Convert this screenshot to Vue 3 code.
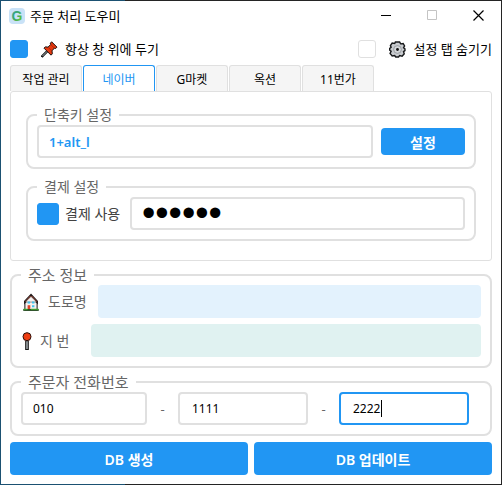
<template>
  <div class="window">
    <header class="title-bar">
      <svg class="app-icon" viewBox="0 0 16 16" aria-hidden="true">
        <defs>
          <linearGradient id="logo-fill" x1="0" y1="0" x2="1" y2="1">
            <stop offset="0" stop-color="#2f9fb4" />
            <stop offset="0.5" stop-color="#3faa5c" />
            <stop offset="1" stop-color="#7ed321" />
          </linearGradient>
        </defs>
        <rect width="16" height="16" rx="4" fill="#c9e2f7" />
        <text x="8" y="13" text-anchor="middle" class="logo-letter" fill="url(#logo-fill)">G</text>
      </svg>
      <h1 class="title">주문 처리 도우미</h1>
      <div class="window-controls">
        <button type="button" aria-label="최소화">
          <svg viewBox="0 0 11 11"><path d="M0 5.5h10" stroke="#000" /></svg>
        </button>
        <button type="button" aria-label="최대화" disabled>
          <svg viewBox="0 0 11 11"><path d="M.5.5h9v9h-9z" stroke="#c4c4c4" fill="none" /></svg>
        </button>
        <button type="button" aria-label="닫기">
          <svg viewBox="0 0 11 11"><path d="M.5.5l10 10M10.5.5l-10 10" stroke="#000" stroke-width="1.2" /></svg>
        </button>
      </div>
    </header>

    <main class="content">
      <div class="options">
        <label class="option">
          <input v-model="alwaysOnTop" type="checkbox" class="check" />
          <svg class="option-icon" viewBox="0 0 51 50" aria-hidden="true">
            <path d="M2 47L19 30" stroke="#111" stroke-width="7" />
            <path d="M4 45L19 30" stroke="#a9b4b8" stroke-width="3" />
            <path
              d="M32 2L48 18L44 22L40 21L33 29L34 38L30 42L9 21L13 17L21 18L29 10L28 6Z"
              fill="#e5390f"
              stroke="#1d1210"
              stroke-width="3"
            />
            <path d="M29 10L40 21M21 18L33 29" stroke="#9c2408" stroke-width="2" />
          </svg>
          <span>항상 창 위에 두기</span>
        </label>
        <label class="option">
          <input v-model="hideTabs" type="checkbox" class="check" />
          <svg class="option-icon" viewBox="0 0 48 48" aria-hidden="true">
            <path
              d="M18 3h12l3 5 7-1 4 7-3 5 4 3v5l-4 3 2 6-6 7-7-2-3 4H19l-3-4-7 1-6-7 3-6-4-3v-5l4-3-2-5 5-7 7 1z"
              fill="#c9ccd0"
              stroke="#17191b"
              stroke-width="4"
            />
            <circle cx="24" cy="24" r="11" fill="#d3d6d9" stroke="#85898e" stroke-width="2" />
            <circle cx="24" cy="24" r="4" fill="#111" />
          </svg>
          <span>설정 탭 숨기기</span>
        </label>
      </div>

      <div class="tabs" role="tablist">
        <button
          v-for="tab in tabs"
          :key="tab"
          type="button"
          role="tab"
          class="tab"
          :class="{ active: tab === currentTab }"
          :aria-selected="tab === currentTab"
          @click="currentTab = tab"
        >
          {{ tab }}
        </button>
      </div>

      <section class="tab-panel" role="tabpanel">
        <fieldset class="group">
          <legend class="small">단축키 설정</legend>
          <div class="row hotkey-row">
            <input v-model="hotkey" class="field hotkey" type="text" aria-label="단축키" />
            <button type="button" class="primary set-button">설정</button>
          </div>
        </fieldset>
        <fieldset class="group">
          <legend class="small">결제 설정</legend>
          <div class="row">
            <label class="pay-label">
              <input v-model="usePayment" type="checkbox" class="check large" />
              <span>결제 사용</span>
            </label>
            <input v-model="password" class="field password" type="password" aria-label="결제 비밀번호" />
          </div>
        </fieldset>
      </section>

      <fieldset class="group address">
        <legend>주소 정보</legend>
        <div class="row">
          <label class="address-label road" for="road">
            <svg class="house" viewBox="0 0 50 53" aria-hidden="true">
              <path d="M7 26h36v24H7z" fill="#f5f1ef" stroke="#211c1c" stroke-width="3" />
              <path d="M25 4L6 24v6L25 11l19 19v-6z" fill="#e2644c" stroke="#211c1c" stroke-width="3" />
              <path d="M25 11L10 26h30z" fill="#f5f1ef" />
              <path d="M15 25h7v6h-7zM28 25h7v6h-7zM28 36h7v6h-7z" fill="#42c3ee" />
              <path d="M15 36h8v12h-8z" fill="#dc4328" />
              <path d="M2 50h46" stroke="#1d4a1a" stroke-width="5" />
              <path d="M3 48h12M25 48h22" stroke="#43b52f" stroke-width="3" />
            </svg>
            <span>도로명</span>
          </label>
          <input id="road" class="address-field blue" type="text" readonly />
        </div>
        <div class="row">
          <label class="address-label lot" for="lot">
            <svg class="round-pin" viewBox="0 0 28 54" aria-hidden="true">
              <path d="M14 26v28" stroke="#151515" stroke-width="11" />
              <path d="M14 28v23" stroke="#b9c0c4" stroke-width="4" />
              <circle cx="14" cy="14" r="12" fill="#ee3d12" stroke="#2b100b" stroke-width="3" />
            </svg>
            <span>지 번</span>
          </label>
          <input id="lot" class="address-field teal" type="text" readonly />
        </div>
      </fieldset>

      <fieldset class="group">
        <legend>주문자 전화번호</legend>
        <div class="phone-row">
          <input v-model="phone[0]" class="field" type="text" aria-label="전화번호 앞자리" />
          <span>-</span>
          <input v-model="phone[1]" class="field wide" type="text" aria-label="전화번호 가운데 자리" />
          <span>-</span>
          <input v-model="phone[2]" class="field wide editing" type="text" aria-label="전화번호 끝자리" />
        </div>
      </fieldset>

      <div class="actions">
        <button type="button" class="primary">DB 생성</button>
        <button type="button" class="primary">DB 업데이트</button>
      </div>
    </main>
  </div>
</template>

<script setup>
import { ref } from 'vue'

const tabs = ['작업 관리', '네이버', 'G마켓', '옥션', '11번가']
const currentTab = ref('네이버')
const alwaysOnTop = ref(true)
const hideTabs = ref(false)
const hotkey = ref('1+alt_l')
const usePayment = ref(true)
const password = ref('123456')
const phone = ref(['010', '1111', '2222'])
</script>

<style>
body {
  margin: 0;
  background: #fff;
}
</style>

<style scoped>
* {
  box-sizing: border-box;
}

.window {
  min-height: 100vh;
  border: 1px solid #242424;
  border-image: linear-gradient(90deg, #1b5172 25%, #242424 25%) 1;
  background: #fff;
  color: #000;
  font-family: "Noto Sans", "Noto Sans CJK KR", sans-serif;
  font-size: 13px;
  line-height: 18px;
}

button,
input {
  margin: 0;
  font-family: inherit;
}

.title-bar {
  display: flex;
  align-items: center;
  height: 29px;
  padding-left: 8px;
}

.app-icon {
  width: 16px;
  height: 16px;
}

.logo-letter {
  font: bold 14px "Liberation Sans", sans-serif;
}

.title {
  margin: 0 0 0 5px;
  font-size: 13px;
  font-weight: 400;
}

.window-controls {
  display: flex;
  margin-left: auto;
}

.window-controls button {
  display: flex;
  align-items: center;
  justify-content: center;
  width: 46px;
  height: 29px;
  padding: 0;
  border: 0;
  background: none;
}

.window-controls svg {
  width: 11px;
  height: 11px;
}

.content {
  padding: 10px 9px 9px;
}

.options {
  display: flex;
  justify-content: space-between;
}

.option {
  display: flex;
  align-items: center;
  height: 18px;
}

.option-icon {
  width: 17px;
  height: 17px;
  margin: 0 7px 0 13px;
}

.check {
  appearance: none;
  width: 18px;
  height: 18px;
  border: 1px solid #e0e0e0;
  border-radius: 3px;
  background: #fff;
}

.check:checked {
  border-color: #2196f3;
  background: #2196f3;
}

.check.large {
  width: 22px;
  height: 22px;
}

.tabs {
  display: flex;
  gap: 1px;
  margin-top: 7px;
}

.tab {
  min-width: 72px;
  height: 26px;
  padding: 0;
  border: 1px solid #e0e0e0;
  border-bottom: 0;
  border-radius: 3px 3px 0 0;
  background: #f5f5f5;
  color: #000;
  font-size: 12px;
}

.tab.active {
  border-color: #2196f3;
  background: #fff;
  color: #2196f3;
}

.tab-panel {
  display: flex;
  flex-direction: column;
  gap: 8px;
  padding: 13px 15px 19px;
  border: 1px solid #e0e0e0;
  border-radius: 3px;
}

.group {
  min-width: 0;
  margin: 0;
  padding: 0 9px 9px;
  border: 2px solid #e0e0e0;
  border-radius: 8px;
}

.tab-panel ~ .group {
  margin-top: 4px;
}

legend {
  padding: 0 7px;
  color: #666;
  font-size: 15px;
  line-height: 20px;
}

legend.small {
  font-size: 14px;
}

.row {
  display: flex;
  align-items: center;
}

.hotkey-row {
  gap: 8px;
}

.field {
  flex: 1;
  min-width: 0;
  width: 100%;
  height: 33px;
  padding: 0 10px;
  border: 2px solid #e0e0e0;
  border-radius: 4px;
  outline: none;
  background: #fff;
  color: #000;
  font-size: 12px;
}

.field.wide {
  padding: 0 12px;
}

.hotkey {
  color: #2196f3;
  font-size: 13px;
  font-weight: 600;
}

.password {
  font-family: "Liberation Sans", sans-serif;
  font-size: 38px;
}

/* caret shown at the end of the number being typed */
.editing {
  border-color: #2196f3;
  background: linear-gradient(#000, #000) 40px center / 1px 17px no-repeat;
  caret-color: transparent;
}

.primary {
  border: 0;
  border-radius: 4px;
  background: #2196f3;
  color: #fff;
  font-size: 14px;
  font-weight: 600;
}

.set-button {
  width: 84px;
  height: 27px;
}

.pay-label {
  display: flex;
  align-items: center;
  gap: 6px;
  width: 93px;
  color: #424242;
  font-size: 14px;
}

.address .row + .row {
  margin-top: 6px;
}

.address-label {
  display: flex;
  align-items: center;
  gap: 8px;
  padding-left: 1px;
  color: #666;
  font-size: 14px;
}

.road {
  width: 77px;
}

.lot {
  width: 70px;
}

.house {
  width: 18px;
  height: 18px;
}

.round-pin {
  width: 10px;
  height: 18px;
}

.address-field {
  flex: 1;
  min-width: 0;
  height: 33px;
  padding: 0 12px;
  border: 0;
  border-radius: 4px;
  outline: none;
}

.blue {
  background: #e3f2fd;
}

.teal {
  background: #e0f2f1;
}

.phone-row {
  display: grid;
  grid-template-columns: 126fr 31px 130fr 31px 130fr;
  align-items: center;
  padding-right: 12px;
  color: #666;
  text-align: center;
}

.actions {
  display: grid;
  grid-template-columns: 1fr 1fr;
  gap: 6px;
  margin-top: 6px;
}

.actions .primary {
  height: 33px;
}
</style>
